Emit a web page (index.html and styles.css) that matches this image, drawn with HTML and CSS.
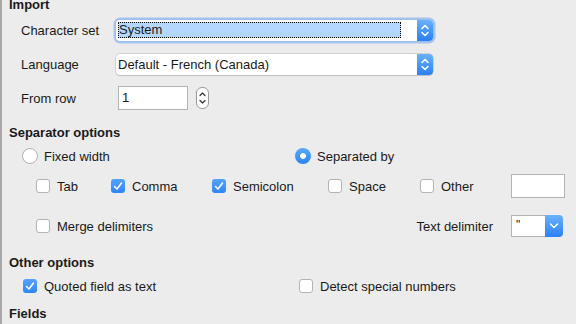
FILE: index.html
```html
<!DOCTYPE html>
<html>
<head>
<meta charset="utf-8">
<link rel="stylesheet" href="styles.css">
</head>
<body>
<div class="dlg">
  <div class="heading h-import">Import</div>
  <div class="form">
    <div class="lbl">Character set</div>
    <div class="select focus">
      <div class="sel-val"><span class="hl">System</span></div>
      <div class="sel-btn"><svg width="16" height="21" viewBox="0 0 16 21"><path d="M5 8.5 L8 5.5 L11 8.5 M5 12.5 L8 15.5 L11 12.5" fill="none" stroke="#fff" stroke-width="1.5" stroke-linecap="round" stroke-linejoin="round"/></svg></div>
    </div>
    <div class="lbl">Language</div>
    <div class="select">
      <div class="sel-val">Default - French (Canada)</div>
      <div class="sel-btn"><svg width="16" height="21" viewBox="0 0 16 21"><path d="M5 8.5 L8 5.5 L11 8.5 M5 12.5 L8 15.5 L11 12.5" fill="none" stroke="#fff" stroke-width="1.5" stroke-linecap="round" stroke-linejoin="round"/></svg></div>
    </div>
    <div class="lbl">From row</div>
    <div class="fromrow">
      <div class="input num">1</div>
      <div class="spin"><svg width="13" height="22" viewBox="0 0 13 22"><path d="M4 8.5 L6.5 6 L9 8.5 M4 13.5 L6.5 16 L9 13.5" fill="none" stroke="#333" stroke-width="1.2" stroke-linecap="round" stroke-linejoin="round"/></svg></div>
    </div>
  </div>

  <div class="heading h-sep">Separator options</div>
  <div class="radios">
    <div class="opt"><span class="radio"></span>Fixed width</div>
    <div class="opt"><span class="radio on"></span>Separated by</div>
  </div>
  <div class="checks">
    <div class="opt"><span class="cb"></span>Tab</div>
    <div class="opt"><span class="cb on"><svg width="14" height="14" viewBox="0 0 14 14"><path d="M3.5 7.5 L6 10 L10.5 4" fill="none" stroke="#fff" stroke-width="1.5" stroke-linecap="round" stroke-linejoin="round"/></svg></span>Comma</div>
    <div class="opt"><span class="cb on"><svg width="14" height="14" viewBox="0 0 14 14"><path d="M3.5 7.5 L6 10 L10.5 4" fill="none" stroke="#fff" stroke-width="1.5" stroke-linecap="round" stroke-linejoin="round"/></svg></span>Semicolon</div>
    <div class="opt"><span class="cb"></span>Space</div>
    <div class="opt"><span class="cb"></span>Other</div>
    <div class="input other"></div>
  </div>
  <div class="merge">
    <div class="opt"><span class="cb"></span>Merge delimiters</div>
    <div class="td-lbl">Text delimiter</div>
    <div class="combo">
      <div class="combo-val">"</div>
      <div class="combo-btn"><svg width="18" height="21" viewBox="0 0 18 21"><path d="M5.5 9 L9 12.5 L12.5 9" fill="none" stroke="#fff" stroke-width="1.5" stroke-linecap="round" stroke-linejoin="round"/></svg></div>
    </div>
  </div>

  <div class="heading h-other">Other options</div>
  <div class="others">
    <div class="opt"><span class="cb on"><svg width="14" height="14" viewBox="0 0 14 14"><path d="M3.5 7.5 L6 10 L10.5 4" fill="none" stroke="#fff" stroke-width="1.5" stroke-linecap="round" stroke-linejoin="round"/></svg></span>Quoted field as text</div>
    <div class="opt"><span class="cb"></span>Detect special numbers</div>
  </div>
  <div class="heading h-fields">Fields</div>
</div>
</body>
</html>
```
FILE: styles.css
```css
html, body {
  margin: 0;
  padding: 0;
}
body {
  width: 576px;
  height: 324px;
  overflow: hidden;
  background: #ececec;
  font-family: "Liberation Sans", Arial, sans-serif;
  font-size: 13px;
  color: #1a1a1a;
}
.dlg {
  box-sizing: border-box;
  height: 324px;
  border-left: 2px solid #a9a9a9;
}
.heading {
  font-weight: bold;
  padding-left: 7px;
  height: 18px;
  line-height: 18px;
}
.h-import {
  height: 10px;
  line-height: 10px;
}
.h-sep {
  margin-top: 9px;
  height: 17px;
  line-height: 17px;
}
.h-other { margin-top: 13px; }
.h-fields { margin-top: 5px; }

.form {
  display: grid;
  grid-template-columns: 95px 317px;
  grid-auto-rows: 34px;
  align-items: center;
  padding-top: 3px;
  padding-left: 19px;
}
.select {
  position: relative;
  display: flex;
  height: 21px;
  background: #fff;
  border-radius: 4px;
  box-shadow: 0 0 0 0.5px #b8b8b8, 0 1px 1px rgba(0,0,0,0.15);
}
.select.focus {
  box-shadow: 0 0 0 0.5px #8fb8f0, 0 0 0 2.5px rgba(110,165,240,0.55);
}
.sel-val {
  flex: 1;
  display: flex;
  align-items: center;
  padding-left: 2px;
}
.hl {
  display: block;
  width: 282px;
  height: 16px;
  line-height: 16px;
  background: #b3d7ff;
  outline: 1px dotted #000;
  outline-offset: -1px;
  padding-left: 1px;
}
.sel-btn {
  width: 16px;
  height: 21px;
  border-radius: 0 4px 4px 0;
  background: linear-gradient(#6ab2fb, #2a80f7);
}
.sel-btn svg, .combo-btn svg, .spin svg { display: block; }

.fromrow {
  display: flex;
  align-items: center;
  gap: 8px;
  padding-left: 2px;
}
.input {
  box-sizing: border-box;
  background: #fff;
  border: 1px solid #b3b3b3;
}
.num {
  width: 70px;
  height: 24px;
  line-height: 22px;
  padding-left: 3px;
}
.spin {
  box-sizing: border-box;
  width: 13px;
  height: 22px;
  border: 1px solid #9c9c9c;
  border-radius: 6px;
  background: #fff;
}
.spin svg { margin: -1px 0 0 -1px; }

.opt {
  display: flex;
  align-items: center;
  white-space: nowrap;
}
.radio {
  box-sizing: border-box;
  width: 16px;
  height: 16px;
  border-radius: 50%;
  background: #fff;
  border: 1px solid #b0b0b0;
  margin-right: 6px;
}
.radio.on {
  border: none;
  background: radial-gradient(circle, #fff 0 2.6px, transparent 3.2px), linear-gradient(#5aa8fa, #2c84f6);
}
.cb {
  box-sizing: border-box;
  width: 14px;
  height: 14px;
  border-radius: 3px;
  background: #fff;
  border: 1px solid #b3b3b3;
  margin-right: 7px;
  flex: none;
}
.cb.on {
  border: none;
  background: linear-gradient(#55a3fa, #2f86f6);
}
.cb svg { display: block; }

.radios {
  display: grid;
  grid-template-columns: 273px auto;
  height: 30px;
  align-items: center;
  padding-left: 20px;
}
.checks {
  display: grid;
  grid-template-columns: 75px 101px 116px 92px 91px 54px;
  height: 30px;
  align-items: center;
  padding-left: 34px;
}
.other {
  width: 54px;
  height: 24px;
}
.merge {
  display: flex;
  align-items: center;
  height: 30px;
  margin-top: 10px;
  padding-left: 34px;
  padding-right: 13px;
}
.td-lbl {
  margin-left: auto;
  margin-right: 18px;
}
.combo {
  display: flex;
  width: 52px;
  height: 22px;
}
.combo-val {
  box-sizing: border-box;
  flex: 1;
  background: #fff;
  border: 1px solid #b3b3b3;
  border-right: none;
  padding-left: 4px;
  line-height: 18px;
  font-size: 12px;
}
.combo-btn {
  width: 18px;
  height: 22px;
  border-radius: 0 4px 4px 0;
  background: linear-gradient(#6ab2fb, #2a80f7);
}
.others {
  display: grid;
  grid-template-columns: 276px auto;
  height: 28px;
  align-items: center;
  padding-left: 21px;
}
```
